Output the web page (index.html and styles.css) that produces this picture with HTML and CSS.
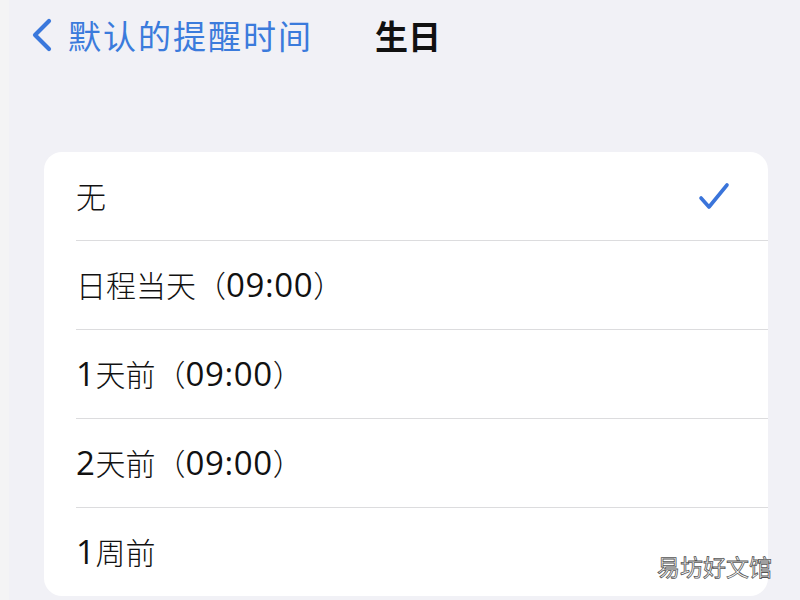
FILE: index.html
```html
<!DOCTYPE html>
<html>
  <head>
    <meta charset="utf-8" />
    <meta name="viewport" content="width=device-width, initial-scale=1.0" />
    <title>生日</title>
    <link rel="stylesheet" href="styles.css">
  </head>
  <body>
    <div class="edge"></div>
    <main class="screen">
      <header class="nav">
        <a class="back" href="#">
          <svg class="chevron" width="24" height="36" viewBox="0 0 24 36">
            <path d="M19 4 L5 18 L19 32" fill="none" stroke="#3a78dc" stroke-width="4.2" stroke-linecap="round" stroke-linejoin="round" />
          </svg>
          <span>默认的提醒时间</span>
        </a>
        <h1>生日</h1>
      </header>
      <ul class="list">
        <li class="row">
          <span>无</span>
          <svg class="check" width="32" height="30" viewBox="0 0 32 30">
            <path d="M3 17 L11 26 L29 4" fill="none" stroke="#3a74da" stroke-width="3.6" stroke-linecap="round" stroke-linejoin="round" />
          </svg>
        </li>
        <li class="row"><span>日程当天（<span class="num">09:00</span>）</span></li>
        <li class="row"><span><span class="num">1</span>天前（<span class="num">09:00</span>）</span></li>
        <li class="row"><span><span class="num">2</span>天前（<span class="num">09:00</span>）</span></li>
        <li class="row"><span><span class="num">1</span>周前</span></li>
      </ul>
      <div class="mark">易坊好文馆</div>
    </main>
  </body>
</html>
```

FILE: styles.css
```css
html, body {
    margin: 0;
    height: 100%;
    overflow: hidden;
    background: #f1f1f6;
    font-family: "Noto Sans CJK SC", "Noto Sans", sans-serif;
}
body {
    display: flex;
}
.edge {
    width: 9px;
    background: #f4f4f5;
}
.screen {
    position: relative;
    flex: 1;
}
.nav {
    display: flex;
    align-items: center;
    height: 70px;
    padding-left: 21px;
}
.back {
    display: flex;
    align-items: center;
    gap: 14px;
    color: #3b7bdc;
    text-decoration: none;
    font-size: 33px;
    letter-spacing: 2px;
}
.nav h1 {
    margin: 0 0 0 62px;
    font-size: 33px;
    font-weight: 700;
    color: #111;
}
.list {
    list-style: none;
    margin: 82px 32px 0 35px;
    padding: 0 0 0 32px;
    background: #fff;
    border-radius: 18px;
}
.row {
    display: flex;
    align-items: center;
    justify-content: space-between;
    height: 88px;
    padding-right: 38px;
    border-bottom: 1px solid #dcdcde;
    font-size: 30px;
    font-weight: 300;
    color: #111;
}
.row:last-child {
    border-bottom: none;
}
.row > span {
    margin-top: -2px;
}
.num {
    font-family: "Open Sans", sans-serif;
    font-size: 33px;
    font-weight: 400;
    letter-spacing: 0.6px;
}
.mark {
    position: absolute;
    right: 28px;
    bottom: 17px;
    font-size: 23px;
    color: #fdfdfd;
    -webkit-text-stroke: 0.8px #555;
}
```
